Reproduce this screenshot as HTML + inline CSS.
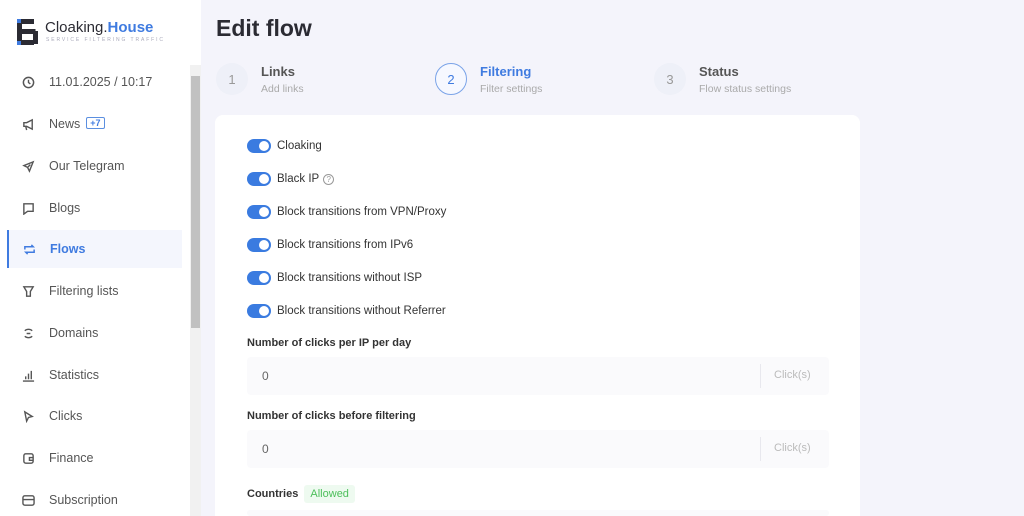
<!DOCTYPE html><html><head><style>
*{margin:0;padding:0;box-sizing:border-box}
html,body{width:1024px;height:516px;overflow:hidden}
body{background:#f4f4fb;font-family:"Liberation Sans",sans-serif;position:relative;color:#2b2b33}
.sb{position:absolute;left:0;top:0;width:201px;height:516px;background:#fff}
.scr{position:absolute;left:190px;top:65px;width:11px;height:451px;background:#f1f1f1}
.thumb{position:absolute;left:191px;top:76px;width:9px;height:252px;background:#c1c1c1}
.item{position:absolute;left:8px;width:175px;height:38px;display:flex;align-items:center;font-size:12.5px;color:#555}
.item svg{position:absolute;left:14px}
.item span.t{position:absolute;left:41px}
.act{background:#f4f6fd;border-left:2px solid #3f7be0;color:#3f7be0;font-weight:bold}
.badge{display:inline-block;border:1px solid #5b8fe0;color:#3f7be0;font-size:9px;font-weight:bold;padding:0 3px;margin-left:6px;border-radius:2px;vertical-align:2px}
h1{position:absolute;left:216px;top:15px;font-size:23px;font-weight:bold;color:#2b2b33}
.step{position:absolute;top:63px}
.circ{position:absolute;width:32px;height:32px;border-radius:50%;background:#eef0f8;color:#999;font-size:13px;display:flex;align-items:center;justify-content:center;top:0}
.st1{position:absolute;left:45px;top:1px;font-size:13px;font-weight:bold;color:#555;white-space:nowrap}
.st2{position:absolute;left:45px;top:20px;font-size:10.5px;color:#aaa;white-space:nowrap}
.card{position:absolute;left:215px;top:115px;width:645px;height:401px;background:#fff;border-radius:8px 8px 0 0}
.tg{position:absolute;left:247px;display:flex;align-items:center;font-size:11.5px;color:#333}
.sw{width:24px;height:14px;border-radius:7px;background:#3a7be0;position:relative;margin-right:6px}
.sw:after{content:"";position:absolute;right:2px;top:2px;width:10px;height:10px;border-radius:50%;background:#fff}
.lbl{position:absolute;left:247px;font-size:11px;font-weight:bold;color:#333}
.inp{position:absolute;left:247px;width:582px;height:38px;background:#fafafc;border-radius:4px;font-size:12px;color:#666}
.inp .v{position:absolute;left:15px;top:12px}
.inp .d{position:absolute;left:513px;top:7px;width:1px;height:24px;background:#e8e8ee}
.inp .c{position:absolute;left:527px;top:12px;color:#bbb;font-size:11px}
</style></head><body>
<div class="sb">
<svg style="position:absolute;left:17px;top:19px" width="21" height="26" viewBox="0 0 21 26"><rect x="0" y="0" width="4" height="4" fill="#3f7be0"/><rect x="0" y="22" width="4" height="4" fill="#3f7be0"/><path d="M4 2.5h13M2.5 4v18M2.5 12.5h16M18.5 12v13M4 23.5h13" stroke="#2b2b33" stroke-width="5" fill="none"/></svg>
<div style="position:absolute;left:45px;top:19px;font-size:15px;color:#2b2b33">Cloaking.<b style="color:#3f7be0">House</b></div>
<div style="position:absolute;left:46px;top:37px;font-size:5px;letter-spacing:1.9px;color:#aab">SERVICE FILTERING TRAFFIC</div>
</div>
<div class="scr"></div><div class="thumb"></div>
<div class="item" style="top:63px"><svg width="13" height="13" viewBox="0 0 14 14"><circle cx="7" cy="7" r="5.5" fill="none" stroke="#555" stroke-width="1.6"/><path d="M7 4v3l2 1.5" stroke="#555" stroke-width="1.5" fill="none"/></svg><span class="t">11.01.2025 / 10:17</span></div>
<div class="item" style="top:105px"><svg width="13" height="13" viewBox="0 0 14 14"><path d="M2 5h3l6-3v10l-6-3H2zM4 9l1 4" stroke="#555" stroke-width="1.5" fill="none"/></svg><span class="t">News<span class="badge">+7</span></span></div>
<div class="item" style="top:147px"><svg width="13" height="13" viewBox="0 0 14 14"><path d="M12 2L2 6l4 2 2 4z M6 8l3-3" stroke="#555" stroke-width="1.5" fill="none"/></svg><span class="t">Our Telegram</span></div>
<div class="item" style="top:189px"><svg width="13" height="13" viewBox="0 0 14 14"><path d="M2 2h10v8H6l-4 3z" stroke="#555" stroke-width="1.5" fill="none"/></svg><span class="t">Blogs</span></div>
<div class="item act" style="top:230px;left:7px"><svg width="13" height="13" viewBox="0 0 14 14"><path d="M2 7V4h9l-2-2M12 7v3H3l2 2" stroke="#3f7be0" stroke-width="1.6" fill="none"/></svg><span class="t">Flows</span></div>
<div class="item" style="top:272px"><svg width="13" height="13" viewBox="0 0 14 14"><path d="M2 2h10l-3 5v5H5V7z" stroke="#555" stroke-width="1.5" fill="none"/></svg><span class="t">Filtering lists</span></div>
<div class="item" style="top:314px"><svg width="13" height="13" viewBox="0 0 14 14"><path d="M3 4a6 6 0 0 1 8 0M3 10a6 6 0 0 0 8 0M5 7h4" stroke="#555" stroke-width="1.5" fill="none"/></svg><span class="t">Domains</span></div>
<div class="item" style="top:356px"><svg width="13" height="13" viewBox="0 0 14 14"><path d="M1 13h12M4 11V8M7 11V5M10 11V2" stroke="#555" stroke-width="1.5" fill="none"/></svg><span class="t">Statistics</span></div>
<div class="item" style="top:397px"><svg width="13" height="13" viewBox="0 0 14 14"><path d="M3 2l8 5-4 1-2 4z" stroke="#555" stroke-width="1.5" fill="none"/></svg><span class="t">Clicks</span></div>
<div class="item" style="top:439px"><svg width="13" height="13" viewBox="0 0 14 14"><rect x="2" y="2" width="10" height="10" rx="2" stroke="#555" stroke-width="1.5" fill="none"/><path d="M12 6H8v3h4" stroke="#555" stroke-width="1.5" fill="none"/></svg><span class="t">Finance</span></div>
<div class="item" style="top:481px"><svg width="13" height="13" viewBox="0 0 14 14"><rect x="1" y="2" width="12" height="10" rx="2" stroke="#555" stroke-width="1.5" fill="none"/><path d="M1 6h12" stroke="#555" stroke-width="1.5"/></svg><span class="t">Subscription</span></div>
<h1>Edit flow</h1>
<div class="step" style="left:216px"><div class="circ">1</div><div class="st1">Links</div><div class="st2">Add links</div></div>
<div class="step" style="left:435px"><div class="circ" style="background:#f6f8ff;border:1px solid #7aa3e8;color:#3f7be0">2</div><div class="st1" style="color:#3f7be0">Filtering</div><div class="st2">Filter settings</div></div>
<div class="step" style="left:654px"><div class="circ">3</div><div class="st1">Status</div><div class="st2">Flow status settings</div></div>
<div class="card"></div>
<div class="tg" style="top:139px"><div class="sw"></div>Cloaking</div>
<div class="tg" style="top:172px"><div class="sw"></div>Black IP <span style="display:inline-block;width:11px;height:11px;border:1px solid #999;border-radius:50%;font-size:8px;text-align:center;line-height:10px;color:#999;margin-left:4px">?</span></div>
<div class="tg" style="top:205px"><div class="sw"></div>Block transitions from VPN/Proxy</div>
<div class="tg" style="top:238px"><div class="sw"></div>Block transitions from IPv6</div>
<div class="tg" style="top:271px"><div class="sw"></div>Block transitions without ISP</div>
<div class="tg" style="top:304px"><div class="sw"></div>Block transitions without Referrer</div>
<div class="lbl" style="top:337px">Number of clicks per IP per day</div>
<div class="inp" style="top:357px"><span class="v">0</span><span class="d"></span><span class="c">Click(s)</span></div>
<div class="lbl" style="top:410px">Number of clicks before filtering</div>
<div class="inp" style="top:430px"><span class="v">0</span><span class="d"></span><span class="c">Click(s)</span></div>
<div class="lbl" style="top:488px">Countries <span style="background:#eefaf0;color:#4cbf5a;font-weight:normal;padding:3px 6px;margin-left:3px;border-radius:3px">Allowed</span></div>
<div class="inp" style="top:510px;height:6px"></div>
</body></html>
